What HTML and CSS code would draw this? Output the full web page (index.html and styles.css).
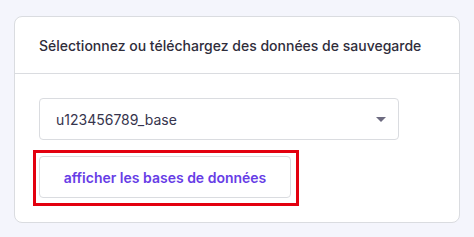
FILE: index.html
```html
<!DOCTYPE html>
<html lang="fr">
<head>
    <meta charset="UTF-8">
    <meta name="viewport" content="width=device-width, initial-scale=1.0">
    <title>Sauvegardes</title>
    <link rel="stylesheet" href="styles.css">
</head>
<body>
    <div class="card">
        <div class="card-header">Sélectionnez ou téléchargez des données de sauvegarde</div>
        <div class="card-body">
            <div class="select">
                <span class="select-value">u123456789_base</span>
                <svg class="select-arrow" width="10" height="5" viewBox="0 0 10 5"><path d="M0 0h10L5 5z" fill="#6d6b80"/></svg>
            </div>
            <div class="highlight">
                <div class="button">afficher les bases de données</div>
            </div>
        </div>
    </div>
</body>
</html>
```

FILE: styles.css
```css
body {
    margin: 0;
    padding: 16px 14px 14px;
    font-family: Inter, "Noto Sans", sans-serif;
    background-color: #f4f5fc;
    color: #36344d;
}
.card {
    background-color: #fff;
    border: 1px solid #dadce0;
    border-radius: 8px;
}
.card-header {
    height: 56px;
    padding: 0 24px;
    display: flex;
    align-items: center;
    font-size: 14px;
    font-weight: 500;
    color: #2f2d3b;
    border-bottom: 1px solid #dadce0;
}
.card-body {
    padding: 24px 24px 16px;
}
.select {
    width: 360px;
    height: 42px;
    box-sizing: border-box;
    padding: 0 12px 0 16px;
    border: 1px solid #dadce0;
    border-radius: 4px;
    display: flex;
    align-items: center;
    justify-content: space-between;
    font-size: 14px;
}
.highlight {
    display: inline-block;
    margin: 10px 0 0 -6px;
    padding: 3px 5px 5px 3px;
    border: 3px solid #e3000f;
}
.button {
    width: 252px;
    height: 42px;
    box-sizing: border-box;
    border: 1px solid #dadce0;
    border-radius: 4px;
    display: flex;
    align-items: center;
    justify-content: center;
    font-size: 14px;
    font-weight: 600;
    color: #673de6;
}
```
